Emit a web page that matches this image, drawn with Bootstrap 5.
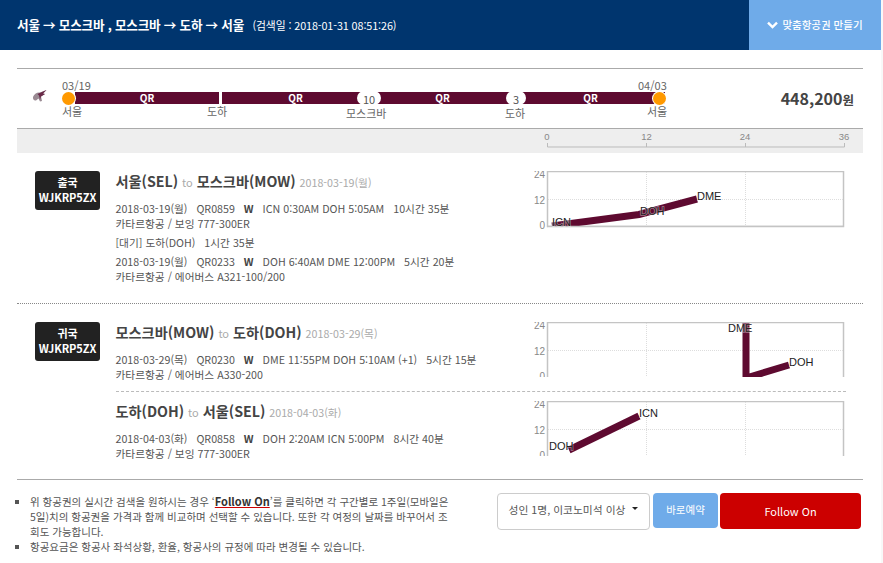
<!DOCTYPE html>
<html lang="ko">
<head>
<meta charset="utf-8">
<title>항공권</title>
<link href="https://cdn.jsdelivr.net/npm/bootstrap@5.3.0/dist/css/bootstrap.min.css" rel="stylesheet">
<style>
html,body{height:100%;overflow:hidden}
body{background:#f8f8f8;font-family:"Noto Sans CJK KR","Noto Sans",sans-serif;font-size:10.7px;color:#555;line-height:15px}
.shell{width:881px;height:563px;background:#fff}
.topbar{height:50px;background:#00356e;color:#fff}
.topbar-title{font-size:12.6px;font-weight:700;padding-left:17px;letter-spacing:-.2px}
.topbar-title small{font-size:10.8px;font-weight:400;margin-left:5px;letter-spacing:-.1px}
.make-btn{width:132px;background:#6fabe9;color:#fff;font-size:10.5px;border:0;border-radius:0;font-weight:500}
.body-wrap{padding:18px 18px 0 17px}
.summary{height:61px;border-top:1px solid #aaa;border-bottom:1px solid #aaa;padding-top:23px}
.logo-box{width:45px;padding-left:15px;margin-top:-3px}
.track{width:603px;height:12px}
.seg{background:#5e0a30;color:#fff;font-weight:700;font-size:10px;line-height:12px;text-align:center;height:12px}
.s1{width:144px;margin-left:13px;margin-right:3px}
.s2,.s3{width:147px}
.s4{width:149px}
.dot{position:absolute;width:13px;height:13px;background:#f90;border-radius:50%;top:0;box-shadow:0 0 0 1px #fff}
.d1{left:0}.d2{left:591px}
.pill{position:absolute;background:#fff;height:14px;top:-1px;border-radius:7px;text-align:center;font-size:11px;line-height:16px;color:#555}
.p1{left:295px;width:24px}.p2{left:444px;width:20px}
.lbl{position:absolute;font-size:11px;line-height:14px;color:#666;white-space:nowrap}
.price{margin-left:auto;padding-right:9px;font-size:16px;font-weight:700;color:#444;line-height:12px}
.price span{font-size:12.5px}
.axis{height:24px;background:#eee}
.axis svg{display:block;margin-left:513px}
.trip{padding-top:18px}
.trip-first{height:151px;border-bottom:1px dotted #888}
.tag{width:65px;height:39px;background:#222;color:#fff;border-radius:3px;font-weight:700;font-size:11px;line-height:15px;text-align:center;padding-top:4px;margin:0 16px 0 18px;flex:none}
.tag div{letter-spacing:-.1px}
.legs{flex:1;margin-left:-.5px}
.leg{height:70px}
.leg-cut{border-bottom:1px dashed #bbb;margin-right:18px}
.leg-last{padding-top:9px;margin-right:18px}
.leg-text{width:414.5px;flex:none}
.leg-title{font-size:14.2px;font-weight:700;line-height:20px;color:#444;margin-bottom:8px;white-space:nowrap}
.leg-title i{font-style:normal;color:#aaa;font-size:11px;font-weight:400}
.leg-title em{font-style:normal;color:#aaa;font-size:10.7px;font-weight:400;margin-left:0}
.fl{white-space:pre;margin:0}
.fl b{color:#444}
.gap-wait{margin:4px 0}
.chart{display:block;flex:none;overflow:hidden}
.chart text{font-family:"Liberation Sans",sans-serif}
.ax{font-size:10px;fill:#888}
.st{font-size:11px;fill:#222;paint-order:stroke;stroke:#fff;stroke-opacity:.45;stroke-width:1.5px}
.foot{margin-top:18px;border-top:1px solid #aaa;padding-top:13px}
.notes{width:435px;padding-left:13px;margin:1px 0 0;list-style:square;font-size:10.5px;color:#555;flex:none}
.notes a{color:#333;font-weight:700;text-decoration-color:#c00;font-size:11px}
.foot-btns{margin-left:45px;align-items:flex-start;gap:3px}
.pax{width:153px;height:37px;background:#fff;border:1px solid #ccc;border-radius:4px;color:#555;font-size:10.75px;padding:0 0 2px 0;white-space:nowrap}
.pax::after{margin-left:7px;vertical-align:4px;color:#222}
.go-btn{width:65px;height:35px;background:#6fabe9;color:#fff;border:0;border-radius:4px;font-size:10.5px;padding:0 0 2px}
.go-btn:hover{background:#6fabe9;color:#fff}
.fo-btn{width:141px;height:36px;background:#c00;color:#fff;border:0;border-radius:4px;font-size:11px;padding:0;margin-left:-1px}
.fo-btn:hover{background:#c00;color:#fff}
</style>
</head>
<body>
<div class="shell">
  <header class="topbar d-flex align-items-stretch">
    <div class="topbar-title flex-grow-1 d-flex align-items-center"><span>서울 → 모스크바 , 모스크바 → 도하 → 서울 <small>(검색일 : 2018-01-31 08:51:26)</small></span></div>
    <button class="btn make-btn d-flex align-items-center justify-content-center gap-1 p-0" type="button">
      <svg width="11" height="8" viewBox="0 0 11 8"><path d="M1 1.6 5.5 6 10 1.6" fill="none" stroke="#fff" stroke-width="2.4"/></svg>맞춤항공권 만들기</button>
  </header>
  <main class="body-wrap">
    <section class="summary d-flex">
      <div class="logo-box">
        <svg width="16" height="14" viewBox="0 0 16 14" class="d-block"><path d="M1 8C2 5 5 3 8 3.500L14.500 1 11 4.500 13 5 9 7.500 10 12 8 12.500 6.500 9.500 4 11.500C2 12 .6 10 1 8z" fill="#9a8a93"/><path d="M5.500 5 14.500 1 11 4.500 13 5 9 7.500 8 10.500 7 6.500z" fill="#6a2a48"/></svg>
      </div>
      <div class="track position-relative d-flex">
        <div class="seg s1">QR</div><div class="seg s2">QR</div><div class="seg s3">QR</div><div class="seg s4">QR</div>
        <span class="dot d1"></span><span class="dot d2"></span>
        <span class="pill p1">10</span><span class="pill p2">3</span>
        <span class="lbl" style="left:0;top:-14px">03/19</span>
        <span class="lbl" style="left:0;top:12px">서울</span>
        <span class="lbl" style="left:145px;top:12px">도하</span>
        <span class="lbl" style="left:284px;top:14px">모스크바</span>
        <span class="lbl" style="left:443px;top:14px">도하</span>
        <span class="lbl" style="left:576px;top:-14px">04/03</span>
        <span class="lbl" style="left:585px;top:12px">서울</span>
      </div>
      <div class="price">448,200<span>원</span></div>
    </section>
    <div class="axis">
      <svg width="330" height="24" viewBox="0 0 330 24">
        <g font-family="Liberation Sans" font-size="9.5" fill="#888" text-anchor="middle">
          <text x="17" y="11">0</text><text x="116.500" y="11">12</text><text x="215" y="11">24</text><text x="314" y="11">36</text>
        </g>
        <path d="M17.500 14v4h297v-4M116.500 14v4M215.500 14v4" fill="none" stroke="#bbb"/>
      </svg>
    </div>
    <section class="trip trip-first d-flex">
      <div class="tag"><div>출국</div><div>WJKRP5ZX</div></div>
      <div class="legs d-flex">
        <div class="leg-text">
          <div class="leg-title">서울(SEL) <i>to</i> 모스크바(MOW) <em>2018-03-19(월)</em></div>
          <p class="fl">2018-03-19(월)   QR0859   <b>W</b>   ICN 0:30AM DOH 5:05AM   10시간 35분</p>
          <p class="fl">카타르항공 / 보잉 777-300ER</p>
          <p class="fl gap-wait">[대기] 도하(DOH)   1시간 35분</p>
          <p class="fl">2018-03-19(월)   QR0233   <b>W</b>   DOH 6:40AM DME 12:00PM   5시간 20분</p>
          <p class="fl">카타르항공 / 에어버스 A321-100/200</p>
        </div>
        <svg class="chart" width="316" height="58" viewBox="530 171 316 58">
          <rect x="547.500" y="171.500" width="296" height="55" fill="#fff" stroke="#c4c4c4" stroke-width="1.500"/>
          <path d="M548 199.500H843M646.500 172V226M745.500 172V226" stroke="#ddd" stroke-dasharray="1 1" fill="none"/>
          <path d="M552 226 639 214.500 697 199" fill="none" stroke="#5e0a30" stroke-width="7"/>
          <rect x="548" y="227" width="296" height="4" fill="#fff"/>
          <path d="M547.500 226.500H844" stroke="#c4c4c4" stroke-width="1.500"/>
          <text class="ax" x="545" y="178" text-anchor="end">24</text><text class="ax" x="545" y="204" text-anchor="end">12</text><text class="ax" x="545" y="229" text-anchor="end">0</text>
          <text class="st" x="552" y="226">ICN</text><text class="st" x="640" y="215">DOH</text><text class="st" x="697" y="200">DME</text>
        </svg>
      </div>
    </section>
    <section class="trip d-flex">
      <div class="tag"><div>귀국</div><div>WJKRP5ZX</div></div>
      <div class="legs">
        <div class="leg leg-cut d-flex">
          <div class="leg-text">
            <div class="leg-title">모스크바(MOW) <i>to</i> 도하(DOH) <em>2018-03-29(목)</em></div>
            <p class="fl">2018-03-29(목)   QR0230   <b>W</b>   DME 11:55PM DOH 5:10AM (+1)   5시간 15분</p>
            <p class="fl">카타르항공 / 에어버스 A330-200</p>
          </div>
          <svg class="chart" width="316" height="55" viewBox="530 322 316 55">
            <rect x="547.500" y="322.500" width="296" height="70" fill="#fff" stroke="#c4c4c4" stroke-width="1.500"/>
            <path d="M548 350.500H843M646.500 323V377M745.500 323V377" stroke="#ddd" stroke-dasharray="1 1" fill="none"/>
            <path d="M746 323V378L789 365" fill="none" stroke="#5e0a30" stroke-width="7"/>
            <text class="ax" x="545" y="329" text-anchor="end">24</text><text class="ax" x="545" y="355" text-anchor="end">12</text><text class="ax" x="545" y="380" text-anchor="end">0</text>
            <text class="st" x="728" y="332">DME</text><text class="st" x="789" y="366">DOH</text>
          </svg>
        </div>
        <div class="leg-last d-flex">
          <div class="leg-text">
            <div class="leg-title">도하(DOH) <i>to</i> 서울(SEL) <em>2018-04-03(화)</em></div>
            <p class="fl">2018-04-03(화)   QR0858   <b>W</b>   DOH 2:20AM ICN 5:00PM   8시간 40분</p>
            <p class="fl">카타르항공 / 보잉 777-300ER</p>
          </div>
          <svg class="chart" width="316" height="55" viewBox="530 402 316 55">
            <rect x="547.500" y="402.500" width="296" height="70" fill="#fff" stroke="#c4c4c4" stroke-width="1.500"/>
            <path d="M548 430.500H843M646.500 403V457M745.500 403V457" stroke="#ddd" stroke-dasharray="1 1" fill="none"/>
            <path d="M569 451 639 417" fill="none" stroke="#5e0a30" stroke-width="7"/>
            <text class="ax" x="545" y="409" text-anchor="end">24</text><text class="ax" x="545" y="435" text-anchor="end">12</text><text class="ax" x="545" y="460" text-anchor="end">0</text>
            <text class="st" x="549" y="451">DOH</text><text class="st" x="639" y="418">ICN</text>
          </svg>
        </div>
      </div>
    </section>
    <footer class="foot d-flex">
      <ul class="notes">
        <li>위 항공권의 실시간 검색을 원하시는 경우 ‘<a href="#">Follow On</a>’를 클릭하면 각 구간별로 1주일(모바일은 5일)치의 항공권을 가격과 함께 비교하며 선택할 수 있습니다. 또한 각 여정의 날짜를 바꾸어서 조회도 가능합니다.</li>
        <li>항공요금은 항공사 좌석상황, 환율, 항공사의 규정에 따라 변경될 수 있습니다.</li>
      </ul>
      <div class="foot-btns d-flex">
        <button class="btn pax dropdown-toggle" type="button">성인 1명, 이코노미석 이상</button>
        <button class="btn go-btn" type="button">바로예약</button>
        <button class="btn fo-btn" type="button">Follow On</button>
      </div>
    </footer>
  </main>
</div>
<script src="https://cdn.jsdelivr.net/npm/bootstrap@5.3.0/dist/js/bootstrap.bundle.min.js"></script>
</body>
</html>
